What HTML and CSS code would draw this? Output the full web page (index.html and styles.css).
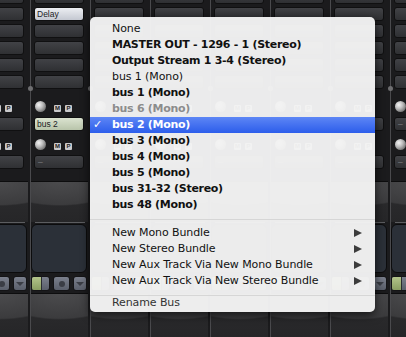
FILE: index.html
```html
<!DOCTYPE html>
<html lang="en">
<head>
  <meta charset="UTF-8" />
  <title>Bus Menu</title>
  <link rel="stylesheet" href="styles.css">
</head>
<body>
  <div class="mixer">
    <div class="strip">
      <div class="inserts">
        <div class="slot"></div><div class="slot"></div><div class="slot"></div>
        <div class="slot"></div><div class="slot"></div><div class="slot"></div>
      </div>
      <div class="ctrl"><span class="knob"></span><span class="tog">M</span><span class="tog">P</span></div>
      <div class="slot bus">–</div>
      <div class="ctrl"><span class="knob"></span><span class="tog">M</span><span class="tog">P</span></div>
      <div class="slot bus">–</div>
      <div class="gloss"></div>
      <div class="rim"></div>
      <div class="pane"></div>
      <div class="btns"><span class="rec"><i></i></span><span class="bt dot"></span><span class="bt arrow"></span></div>
      <div class="gloss low"></div>
    </div>

    <div class="strip">
      <div class="inserts">
        <div class="slot"></div><div class="slot on">Delay</div><div class="slot"></div>
        <div class="slot"></div><div class="slot"></div><div class="slot"></div>
      </div>
      <div class="ctrl"><span class="knob"></span><span class="tog">M</span><span class="tog">P</span></div>
      <div class="slot bus set">bus 2</div>
      <div class="ctrl"><span class="knob"></span><span class="tog">M</span><span class="tog">P</span></div>
      <div class="slot bus">–</div>
      <div class="gloss"></div>
      <div class="rim"></div>
      <div class="pane"></div>
      <div class="btns"><span class="rec"><i></i></span><span class="bt dot"></span><span class="bt arrow"></span></div>
      <div class="gloss low"></div>
    </div>

    <div class="strip">
      <div class="inserts">
        <div class="slot"></div><div class="slot"></div><div class="slot"></div>
        <div class="slot"></div><div class="slot"></div><div class="slot"></div>
      </div>
      <div class="ctrl"><span class="knob"></span><span class="tog">M</span><span class="tog">P</span></div>
      <div class="slot bus">–</div>
      <div class="ctrl"><span class="knob"></span><span class="tog">M</span><span class="tog">P</span></div>
      <div class="slot bus">–</div>
      <div class="gloss"></div>
      <div class="rim"></div>
      <div class="pane"></div>
      <div class="btns"><span class="rec"><i></i></span><span class="bt dot"></span><span class="bt arrow"></span></div>
      <div class="gloss low"></div>
    </div>

    <div class="strip">
      <div class="inserts">
        <div class="slot"></div><div class="slot"></div><div class="slot"></div>
        <div class="slot"></div><div class="slot"></div><div class="slot"></div>
      </div>
      <div class="ctrl"><span class="knob"></span><span class="tog">M</span><span class="tog">P</span></div>
      <div class="slot bus">–</div>
      <div class="ctrl"><span class="knob"></span><span class="tog">M</span><span class="tog">P</span></div>
      <div class="slot bus">–</div>
      <div class="gloss"></div>
      <div class="rim"></div>
      <div class="pane"></div>
      <div class="btns"><span class="rec"><i></i></span><span class="bt dot"></span><span class="bt arrow"></span></div>
      <div class="gloss low"></div>
    </div>

    <div class="strip">
      <div class="inserts">
        <div class="slot"></div><div class="slot"></div><div class="slot"></div>
        <div class="slot"></div><div class="slot"></div><div class="slot"></div>
      </div>
      <div class="ctrl"><span class="knob"></span><span class="tog">M</span><span class="tog">P</span></div>
      <div class="slot bus">–</div>
      <div class="ctrl"><span class="knob"></span><span class="tog">M</span><span class="tog">P</span></div>
      <div class="slot bus">–</div>
      <div class="gloss"></div>
      <div class="rim"></div>
      <div class="pane"></div>
      <div class="btns"><span class="rec"><i></i></span><span class="bt dot"></span><span class="bt arrow"></span></div>
      <div class="gloss low"></div>
    </div>

    <div class="strip">
      <div class="inserts">
        <div class="slot"></div><div class="slot"></div><div class="slot"></div>
        <div class="slot"></div><div class="slot"></div><div class="slot"></div>
      </div>
      <div class="ctrl"><span class="knob"></span><span class="tog">M</span><span class="tog">P</span></div>
      <div class="slot bus">–</div>
      <div class="ctrl"><span class="knob"></span><span class="tog">M</span><span class="tog">P</span></div>
      <div class="slot bus">–</div>
      <div class="gloss"></div>
      <div class="rim"></div>
      <div class="pane"></div>
      <div class="btns"><span class="rec"><i></i></span><span class="bt dot"></span><span class="bt arrow"></span></div>
      <div class="gloss low"></div>
    </div>

    <div class="strip">
      <div class="inserts">
        <div class="slot"></div><div class="slot"></div><div class="slot"></div>
        <div class="slot"></div><div class="slot"></div><div class="slot"></div>
      </div>
      <div class="ctrl"><span class="knob"></span><span class="tog">M</span><span class="tog">P</span></div>
      <div class="slot bus">–</div>
      <div class="ctrl"><span class="knob"></span><span class="tog">M</span><span class="tog">P</span></div>
      <div class="slot bus">–</div>
      <div class="gloss"></div>
      <div class="rim"></div>
      <div class="pane"></div>
      <div class="btns"><span class="rec"><i></i></span><span class="bt dot"></span><span class="bt arrow"></span></div>
      <div class="gloss low"></div>
    </div>

    <div class="strip">
      <div class="inserts">
        <div class="slot"></div><div class="slot"></div><div class="slot"></div>
        <div class="slot"></div><div class="slot"></div><div class="slot"></div>
      </div>
      <div class="ctrl"><span class="knob"></span><span class="tog">M</span><span class="tog">P</span></div>
      <div class="slot bus">–</div>
      <div class="ctrl"><span class="knob"></span><span class="tog">M</span><span class="tog">P</span></div>
      <div class="slot bus">–</div>
      <div class="gloss"></div>
      <div class="rim"></div>
      <div class="pane"></div>
      <div class="btns"><span class="rec"><i></i></span><span class="bt dot"></span><span class="bt arrow"></span></div>
      <div class="gloss low"></div>
    </div>
  </div>

  <div class="menu">
    <div class="item">None</div>
    <div class="item b">MASTER OUT - 1296 - 1 (Stereo)</div>
    <div class="item b">Output Stream 1 3-4 (Stereo)</div>
    <div class="item">bus 1 (Mono)</div>
    <div class="item b">bus 1 (Mono)</div>
    <div class="item b off">bus 6 (Mono)</div>
    <div class="item b hi"><span class="check">✓</span>bus 2 (Mono)</div>
    <div class="item b">bus 3 (Mono)</div>
    <div class="item b">bus 4 (Mono)</div>
    <div class="item b">bus 5 (Mono)</div>
    <div class="item b">bus 31-32 (Stereo)</div>
    <div class="item b">bus 48 (Mono)</div>
    <div class="sep"></div>
    <div class="item sub">New Mono Bundle</div>
    <div class="item sub">New Stereo Bundle</div>
    <div class="item sub">New Aux Track Via New Mono Bundle</div>
    <div class="item sub">New Aux Track Via New Stereo Bundle</div>
    <div class="sep last"></div>
    <div class="item tail">Rename Bus</div>
  </div>
</body>
</html>
```

FILE: styles.css
```css
body {
  margin: 0;
  width: 406px;
  height: 337px;
  overflow: hidden;
  background-color: #1b1b1d;
  font-family: "Liberation Sans", Arial, sans-serif;
  position: relative;
}

.mixer {
  display: flex;
  margin-left: -30px;
  height: 337px;
}

.strip {
  flex: 0 0 60px;
  box-sizing: border-box;
  border-left: 1px solid #4a4a4d;
  display: flex;
  flex-direction: column;
  position: relative;
}

.strip::before {
  content: "";
  position: absolute;
  left: -3px;
  top: 86px;
  width: 5px;
  height: 5px;
  border-radius: 50%;
  background: #6e6e70;
}

.inserts {
  display: flex;
  flex-direction: column;
  gap: 3px;
  margin-top: -10px;
}

.slot {
  box-sizing: border-box;
  width: 50px;
  height: 14px;
  margin-left: 3px;
  border: 1px solid #101011;
  border-radius: 3px;
  background: linear-gradient(#414246, #2f3033);
  color: #77787c;
  font-size: 8.5px;
  line-height: 12px;
  padding-left: 3px;
}

.slot.on {
  background: linear-gradient(#eceef2, #c4c8d1);
  color: #1c1c1f;
  padding-left: 2px;
}

.slot.set {
  background: linear-gradient(#dbe3d0, #b8c4aa);
  color: #1c1c1f;
  padding-left: 2px;
}

.slot.bus {
  margin-top: 5px;
}

.ctrl {
  display: flex;
  align-items: flex-end;
  height: 11px;
  margin-top: 12px;
  padding-left: 4px;
}

.ctrl + .slot.bus + .ctrl {
  margin-top: 8px;
}

.knob {
  width: 11px;
  height: 11px;
  border-radius: 50%;
  background: radial-gradient(circle at 35% 35%, #f4f4f4 0, #c2c2c2 35%, #6a6a6a 80%, #3c3c3c 100%);
  margin-right: 4px;
}

.tog {
  width: 7px;
  height: 7px;
  margin-left: 4px;
  border-radius: 1px;
  background: #c9c9cb;
  color: #222;
  font-size: 6px;
  font-weight: bold;
  line-height: 7px;
  text-align: center;
}

.gloss {
  margin-top: 12px;
  margin-right: 2px;
  height: 42px;
  box-sizing: border-box;
  border-top: 1px solid #0d0d0e;
  background:
    radial-gradient(ellipse 110% 60% at 50% 0, #4b4b4d 0, #3b3b3d 94%, rgba(0, 0, 0, 0) 100%),
    linear-gradient(#2d2d2f, #262628);
}

.gloss.low {
  margin-top: 2px;
  height: 45px;
}

.rim {
  height: 1px;
  margin: 0 5px 0 4px;
  background: #5c5d60;
}

.pane {
  box-sizing: border-box;
  width: 56px;
  height: 51px;
  margin-top: 1px;
  border: 1px solid #0c0c0d;
  border-radius: 6px;
  background: #2b3038;
}

.btns {
  display: flex;
  gap: 3px;
  height: 15px;
  margin-top: 3px;
}

.rec,
.bt {
  box-sizing: border-box;
  height: 15px;
  border: 1px solid #141416;
  border-radius: 3px;
  background: linear-gradient(#7a7f8c, #5a5f6b);
  display: flex;
  align-items: center;
  justify-content: center;
}

.rec {
  width: 19px;
  justify-content: flex-start;
  overflow: hidden;
}

.rec i {
  width: 9px;
  height: 13px;
  background: linear-gradient(#b3c48a, #8a9d62);
  border-right: 1px solid #2a2c30;
}

.bt.dot {
  width: 17px;
}

.bt.dot::after {
  content: "";
  width: 6px;
  height: 6px;
  border-radius: 50%;
  background: #3a3d45;
}

.bt.arrow {
  width: 14px;
}

.bt.arrow::after {
  content: "";
  border-left: 4px solid transparent;
  border-right: 4px solid transparent;
  border-top: 4px solid #3a3d45;
}

.menu {
  position: absolute;
  left: 90px;
  top: 17px;
  width: 285px;
  box-sizing: border-box;
  padding: 4px 0 2px;
  border-radius: 5px;
  background: rgba(243, 243, 243, 0.97);
  box-shadow: 0 3px 10px rgba(0, 0, 0, 0.7);
  font-family: "DejaVu Sans", sans-serif;
  font-size: 11px;
  letter-spacing: -0.1px;
  color: #111;
}

.item {
  height: 16px;
  line-height: 16px;
  padding-left: 22px;
  padding-right: 13px;
  display: flex;
  align-items: center;
  white-space: nowrap;
}

.item.b {
  font-weight: bold;
  letter-spacing: -0.3px;
}

.item.off {
  color: #8c8c8c;
}

.item.hi {
  background: linear-gradient(#5d86f5, #2c5deb);
  color: #fff;
}

.check {
  width: 19px;
  margin-left: -19px;
  font-weight: bold;
}

.item.sub {
  justify-content: space-between;
}

.item.sub::after {
  content: "";
  border-left: 8px solid #3c3c3c;
  border-top: 4.5px solid transparent;
  border-bottom: 4.5px solid transparent;
}

.sep {
  height: 1px;
  margin: 6px 0 5px;
  background: #d6d6d6;
}

.sep.last {
  margin-bottom: 0;
}

.item.tail {
  height: 14px;
  line-height: 14px;
  color: #333;
}
```
